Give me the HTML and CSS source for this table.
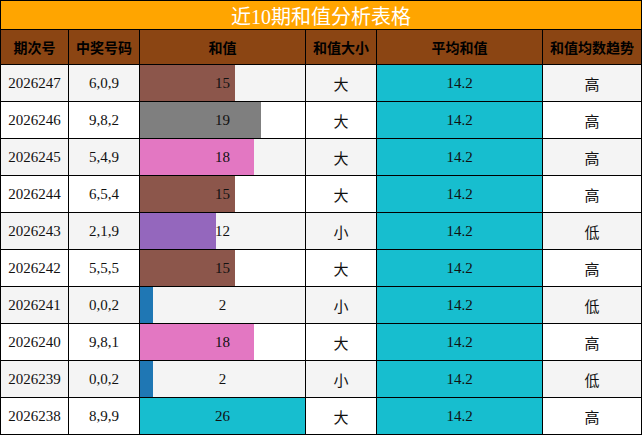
FILE: index.html
```html
<!DOCTYPE html>
<html lang="zh">
<head>
<meta charset="utf-8">
<title>近10期和值分析表格</title>
<link rel="stylesheet" href="styles.css">
</head>
<body>
<div class="table">
  <div class="title">近10期和值分析表格</div>
  <div class="th">期次号</div>
  <div class="th">中奖号码</div>
  <div class="th">和值</div>
  <div class="th">和值大小</div>
  <div class="th">平均和值</div>
  <div class="th">和值均数趋势</div>

  <div class="td odd">2026247</div><div class="td odd">6,0,9</div>
  <div class="td odd sum"><div class="bar brown" style="width:95.2px"></div><span class="val">15</span></div>
  <div class="td odd cjk">大</div><div class="td avg">14.2</div><div class="td odd cjk">高</div>

  <div class="td">2026246</div><div class="td">9,8,2</div>
  <div class="td sum"><div class="bar gray" style="width:120.6px"></div><span class="val">19</span></div>
  <div class="td cjk">大</div><div class="td avg">14.2</div><div class="td cjk">高</div>

  <div class="td odd">2026245</div><div class="td odd">5,4,9</div>
  <div class="td odd sum"><div class="bar pink" style="width:114.2px"></div><span class="val">18</span></div>
  <div class="td odd cjk">大</div><div class="td avg">14.2</div><div class="td odd cjk">高</div>

  <div class="td">2026244</div><div class="td">6,5,4</div>
  <div class="td sum"><div class="bar brown" style="width:95.2px"></div><span class="val">15</span></div>
  <div class="td cjk">大</div><div class="td avg">14.2</div><div class="td cjk">高</div>

  <div class="td odd">2026243</div><div class="td odd">2,1,9</div>
  <div class="td odd sum"><div class="bar purple" style="width:76.2px"></div><span class="val">12</span></div>
  <div class="td odd cjk">小</div><div class="td avg">14.2</div><div class="td odd cjk">低</div>

  <div class="td">2026242</div><div class="td">5,5,5</div>
  <div class="td sum"><div class="bar brown" style="width:95.2px"></div><span class="val">15</span></div>
  <div class="td cjk">大</div><div class="td avg">14.2</div><div class="td cjk">高</div>

  <div class="td odd">2026241</div><div class="td odd">0,0,2</div>
  <div class="td odd sum"><div class="bar blue" style="width:12.7px"></div><span class="val">2</span></div>
  <div class="td odd cjk">小</div><div class="td avg">14.2</div><div class="td odd cjk">低</div>

  <div class="td">2026240</div><div class="td">9,8,1</div>
  <div class="td sum"><div class="bar pink" style="width:114.2px"></div><span class="val">18</span></div>
  <div class="td cjk">大</div><div class="td avg">14.2</div><div class="td cjk">高</div>

  <div class="td odd">2026239</div><div class="td odd">0,0,2</div>
  <div class="td odd sum"><div class="bar blue" style="width:12.7px"></div><span class="val">2</span></div>
  <div class="td odd cjk">小</div><div class="td avg">14.2</div><div class="td odd cjk">低</div>

  <div class="td">2026238</div><div class="td">8,9,9</div>
  <div class="td sum"><div class="bar cyan" style="width:165px"></div><span class="val">26</span></div>
  <div class="td cjk">大</div><div class="td avg">14.2</div><div class="td cjk">高</div>
</div>
</body>
</html>
```
FILE: styles.css
```css
html, body {
  margin: 0;
  padding: 0;
  background: #fff;
}
.table {
  display: grid;
  grid-template-columns: 67px 70px 165px 70px 165px 98px;
  grid-template-rows: 28px 34px repeat(10, 36px);
  gap: 1px;
  padding: 1px;
  width: 642px;
  box-sizing: border-box;
  background: #000;
  font-family: "Liberation Serif", "Noto Sans CJK SC", serif;
}
.title {
  grid-column: 1 / -1;
  background: #ffa500;
  color: #fff;
  font-family: "Liberation Serif", "Noto Sans CJK SC", sans-serif;
  font-size: 20px;
  display: flex;
  align-items: center;
  justify-content: center;
}
.th {
  background: #8b4513;
  color: #000;
  font-family: "Noto Sans CJK SC", sans-serif;
  font-weight: bold;
  font-size: 14px;
  display: flex;
  align-items: center;
  justify-content: center;
}
.td {
  background: #fff;
  color: #111;
  font-size: 15px;
  display: flex;
  align-items: center;
  justify-content: center;
}
.td.odd {
  background: #f4f4f4;
}
.td.cjk {
  font-family: "Noto Sans CJK SC", sans-serif;
}
.td.avg {
  background: #17becf;
}
.td.sum {
  display: grid;
  grid-template-columns: 100%;
  grid-template-rows: 100%;
  justify-content: stretch;
  align-content: stretch;
}
.sum > .bar,
.sum > .val {
  grid-area: 1 / 1;
}
.bar {
  justify-self: start;
  align-self: stretch;
}
.val {
  align-self: center;
  justify-self: center;
  position: relative;
}
.brown { background: #8c564b; }
.gray { background: #7f7f7f; }
.pink { background: #e377c2; }
.purple { background: #9467bd; }
.blue { background: #1f77b4; }
.cyan { background: #17becf; }
```
